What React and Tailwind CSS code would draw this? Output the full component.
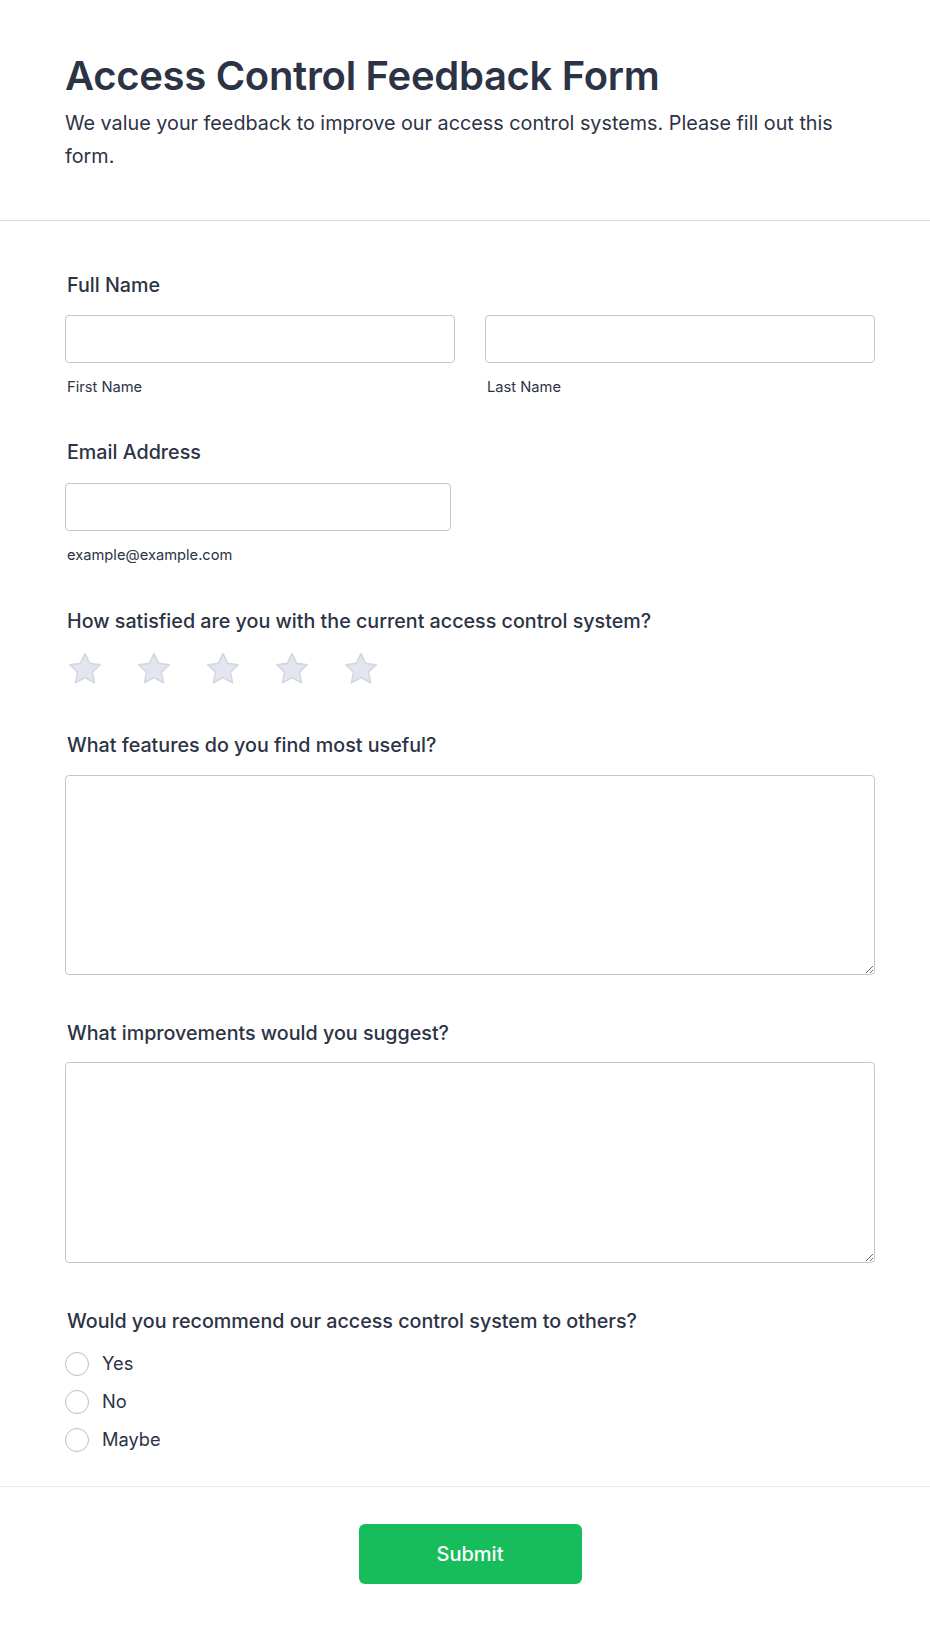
import { useState } from "react";

const font = { fontFamily: "Inter, 'Noto Sans', sans-serif" };

function Star() {
  return (
    <svg width="40" height="38" viewBox="0 0 24 24" className="shrink-0">
      <path
        d="M12 2.3l2.95 6.15 6.7.85-4.95 4.65 1.3 6.7L12 17.4l-6 3.25 1.3-6.7-4.95-4.65 6.7-.85z"
        fill="#e3e6ef"
        stroke="#d3d7e3"
        strokeWidth="1"
        strokeLinejoin="round"
      />
    </svg>
  );
}

function Label({ children }) {
  return (
    <div className="pl-[2px] text-[19.7px] font-medium leading-6 text-[#2c3345]">
      {children}
    </div>
  );
}

function SubLabel({ children }) {
  return (
    <div className="mt-[14px] pl-[2px] text-[14.7px] leading-5 text-[#2c3345]">
      {children}
    </div>
  );
}

const inputCls =
  "h-[48px] w-full rounded-[4px] border border-[#c3c6d6] bg-white px-3 text-base outline-none";

export default function App() {
  const [answer, setAnswer] = useState("");
  const options = ["Yes", "No", "Maybe"];

  return (
    <div className="min-h-[1634px] w-[930px] bg-white text-[#2c3345]" style={font}>
      <header className="border-b border-[#d8dce8] pb-[47px] pl-[65px] pr-[55px] pt-[54px]">
        <h1 className="text-[40px] font-semibold leading-[44px] tracking-[-0.3px]">
          Access Control Feedback Form
        </h1>
        <p className="mt-[9px] text-[19.8px] leading-[33px]">
          We value your feedback to improve our access control systems. Please
          fill out this form.
        </p>
      </header>

      <form
        className="pl-[65px] pr-[55px] pt-[52px]"
        onSubmit={(e) => e.preventDefault()}
      >
        <Label>Full Name</Label>
        <div className="mt-[18px] grid grid-cols-2 gap-[30px]">
          <div>
            <input className={inputCls} />
            <SubLabel>First Name</SubLabel>
          </div>
          <div>
            <input className={inputCls} />
            <SubLabel>Last Name</SubLabel>
          </div>
        </div>

        <div className="mt-[43px]">
          <Label>Email Address</Label>
          <input className={`${inputCls} mt-[19px] !w-[386px]`} />
          <SubLabel>example@example.com</SubLabel>
        </div>

        <div className="mt-[44px]">
          <Label>How satisfied are you with the current access control system?</Label>
          <div className="mt-[17px] flex gap-[29px]">
            <Star />
            <Star />
            <Star />
            <Star />
            <Star />
          </div>
        </div>

        <div className="mt-[45px]">
          <Label>What features do you find most useful?</Label>
          <textarea className="mt-[18px] block h-[200px] w-full rounded-[4px] border border-[#c3c6d6] p-3 outline-none" />
        </div>

        <div className="mt-[46px]">
          <Label>What improvements would you suggest?</Label>
          <textarea className="mt-[17px] block h-[201px] w-full rounded-[4px] border border-[#c3c6d6] p-3 outline-none" />
        </div>

        <div className="mt-[46px]">
          <Label>Would you recommend our access control system to others?</Label>
          <div className="mt-[18px] flex flex-col gap-[13px] pb-[34px]">
            {options.map((opt) => (
              <label
                key={opt}
                className="flex cursor-pointer items-center gap-[13px] text-[18.3px] leading-[25px]"
                onClick={() => setAnswer(opt)}
              >
                <span className="flex h-[24px] w-[24px] shrink-0 items-center justify-center rounded-full border border-[#b8bdc9] bg-white">
                  {answer === opt && (
                    <span className="h-[12px] w-[12px] rounded-full bg-[#2e69ff]" />
                  )}
                </span>
                {opt}
              </label>
            ))}
          </div>
        </div>
      </form>

      <div className="border-t border-[#eaebf2] pb-[50px] pl-[65px] pr-[55px] pt-[37px]">
        <div className="flex justify-center">
          <button
            type="submit"
            className="h-[60px] w-[223px] rounded-[6px] bg-[#18bd5b] text-[20px] font-medium text-white"
          >
            Submit
          </button>
        </div>
      </div>
    </div>
  );
}
